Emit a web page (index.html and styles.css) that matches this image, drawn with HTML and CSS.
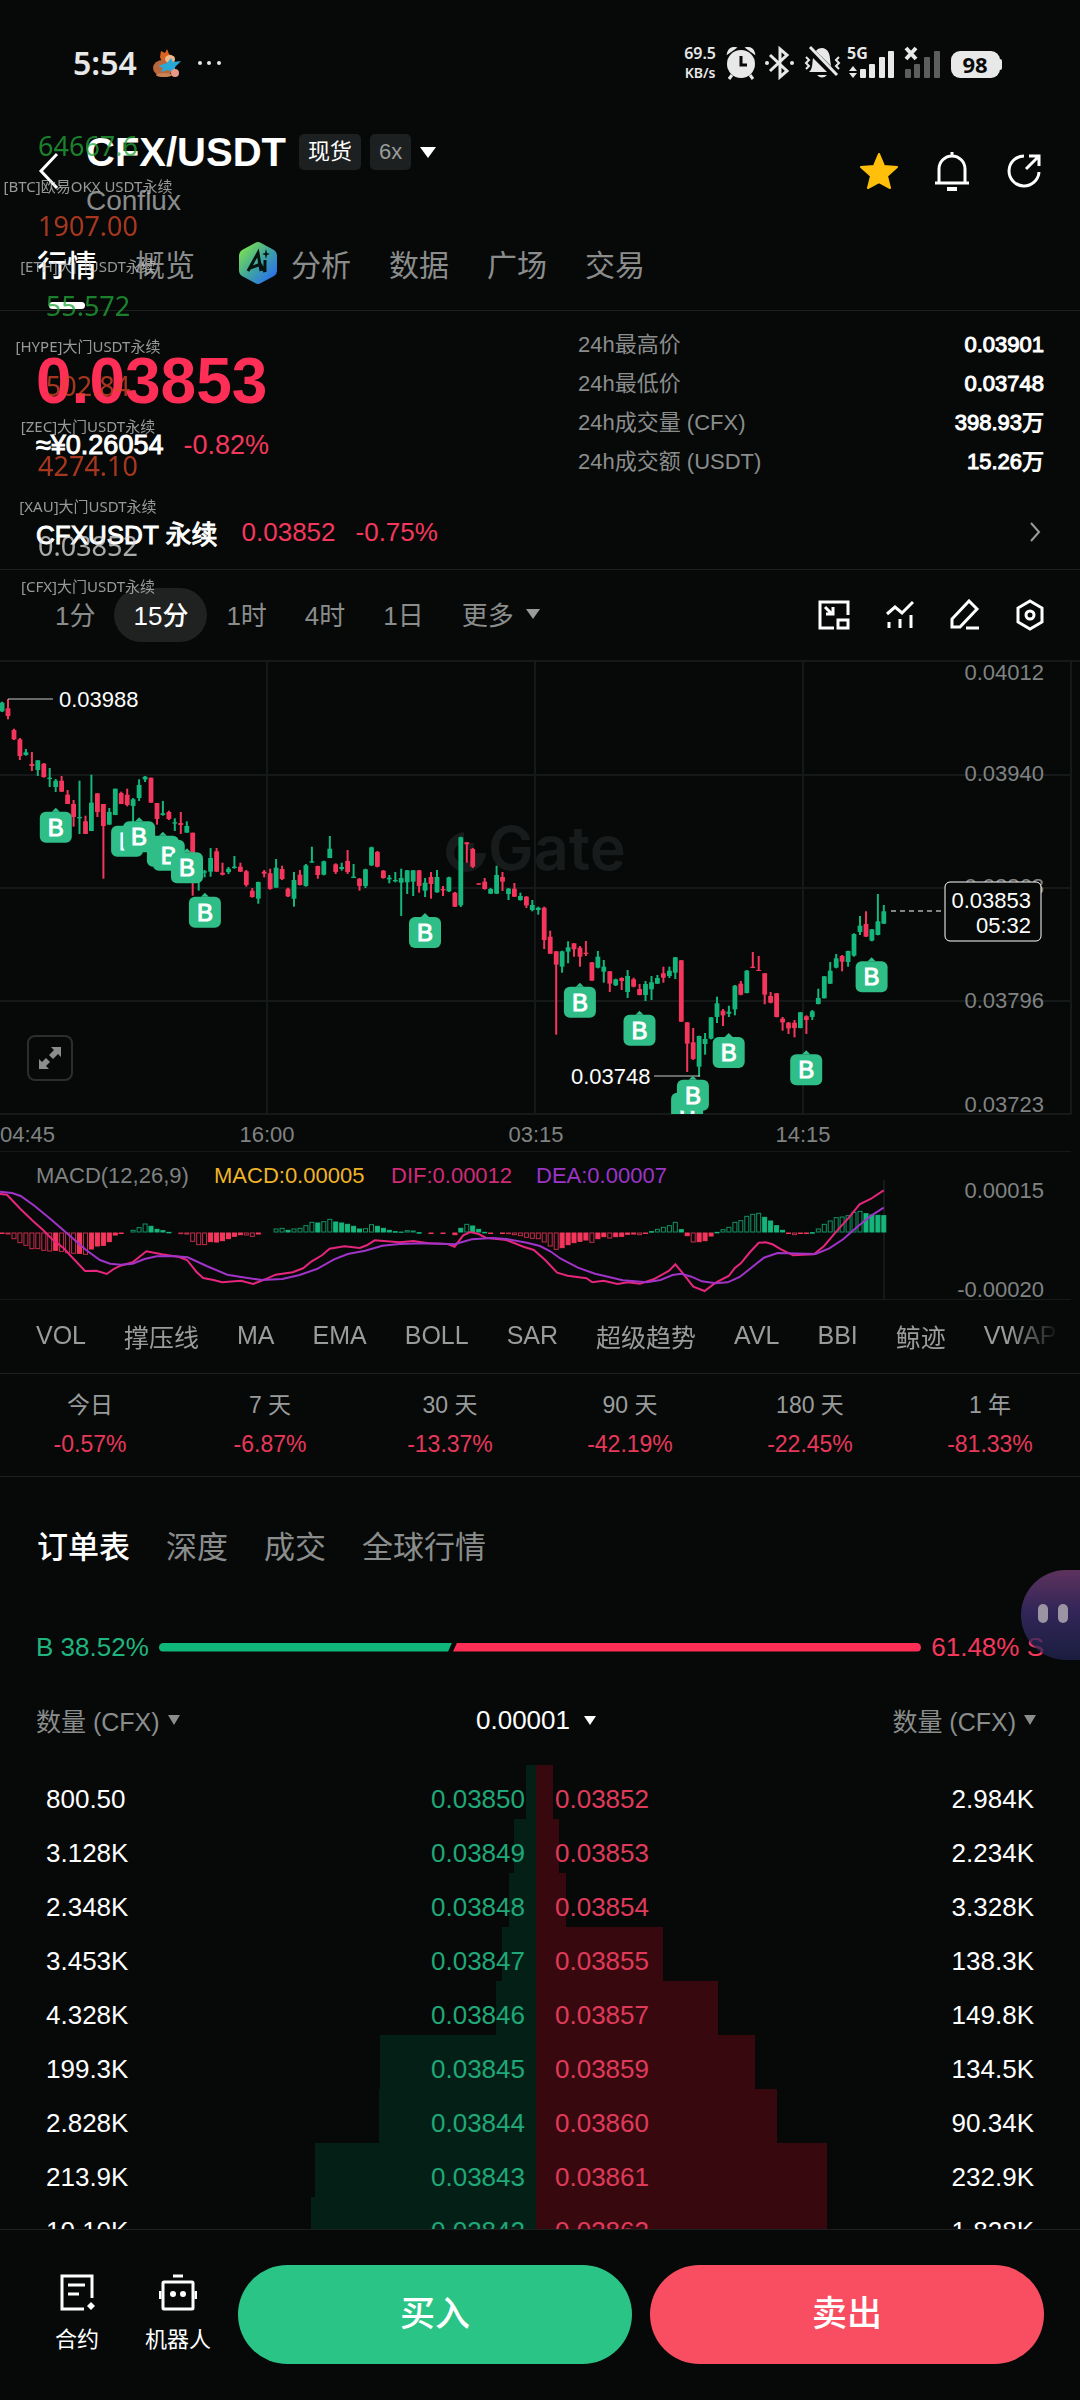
FILE: index.html
```html
<!DOCTYPE html>
<html lang="zh-CN">
<head>
    <meta charset="UTF-8">
    <meta name="viewport" content="width=device-width, initial-scale=1.0">
    <title>CFX/USDT</title>
    <link rel="stylesheet" href="styles.css">
</head>
<body>
<div class="app">

    <div class="status-bar">
        <div class="status-left">
            <span class="clock">5:54</span>
            <svg class="status-pet" viewBox="0 0 28 28" width="28" height="28">
                <path d="M7 8 L8 2 L12 4 L14 0 L16 5 L21 8 L22 14 L10 16Z" fill="#d9641f"/>
                <ellipse cx="10" cy="19" rx="10" ry="8" fill="#b9663c"/>
                <ellipse cx="17" cy="10" rx="5" ry="4" fill="#f0b98a"/>
                <path d="M5 17 L14 14 L18 9 L20 13 L28 12 L22 18 L22 24 L15 21 L8 23 L10 19Z" fill="#28a9d8"/>
                <circle cx="22" cy="24" r="4" fill="#e89a86"/>
                <ellipse cx="11" cy="26" rx="8" ry="2" fill="#c98353"/>
            </svg>
            <svg viewBox="0 0 26 6" width="26" height="6" fill="#e8e8e8"><circle cx="3" cy="3" r="2"/><circle cx="12" cy="3" r="2"/><circle cx="22" cy="3" r="2"/></svg>
        </div>
        <div class="status-right">
            <div class="net-speed"><span>69.5</span><small>KB/s</small></div>
            <svg viewBox="0 0 276 36" width="276" height="36" fill="#e8e8e8">
                <!-- alarm -->
                <g>
                    <circle cx="15" cy="19" r="14"/>
                    <path d="M2 8 A6 6 0 0 1 9 3Z M28 8 A6 6 0 0 0 21 3Z" stroke="#e8e8e8" stroke-width="2"/>
                    <path d="M6 30 L3 34 M24 30 L27 34" stroke="#e8e8e8" stroke-width="3"/>
                    <path d="M15 11 V20 H21" stroke="#060908" stroke-width="3" fill="none"/>
                </g>
                <!-- bluetooth -->
                <g>
                    <path d="M44 10 L61 26 L54 32 V4 L61 10 L44 26" fill="none" stroke="#e8e8e8" stroke-width="3"/>
                    <circle cx="41" cy="18" r="2"/><circle cx="66" cy="18" r="2"/>
                </g>
                <!-- silent bell -->
                <g>
                    <path d="M83 27 C87 24 86 18 87 13 C88 6 92 3 96 3 C101 3 104 8 104 14 C105 20 105 24 109 27Z"/>
                    <path d="M91 30 H101 Q96 35 91 30Z"/>
                    <path d="M81 2 L110 31" stroke="#060908" stroke-width="7"/>
                    <path d="M84 2 L111 30" stroke="#e8e8e8" stroke-width="3"/>
                    <path d="M80 12 l3 3 l-3 3 l3 3 l-3 3 M113 12 l-3 3 l3 3 l-3 3 l3 3" fill="none" stroke="#e8e8e8" stroke-width="2"/>
                </g>
                <!-- signal 1 -->
                <text class="sig-label" x="121" y="14">5G</text>
                <path d="M123 26 l4 -5 l4 5Z M123 28 l4 5 l4 -5Z"/>
                <rect x="134" y="24" width="6" height="9" rx="1"/><rect x="143" y="19" width="6" height="14" rx="1"/>
                <rect x="153" y="12" width="6" height="21" rx="1"/><rect x="162" y="6" width="6" height="27" rx="1"/>
                <!-- signal 2 -->
                <path d="M180 3 L190 14 M190 3 L180 14" stroke="#e8e8e8" stroke-width="4"/>
                <g fill="#5c5e5e">
                    <rect x="179" y="24" width="6" height="9" rx="1"/><rect x="188" y="19" width="6" height="14" rx="1"/>
                    <rect x="198" y="12" width="6" height="21" rx="1"/><rect x="208" y="6" width="6" height="27" rx="1"/>
                </g>
                <!-- battery -->
                <rect x="225" y="6" width="49" height="27" rx="9"/>
                <rect x="272" y="14" width="4" height="11" rx="2"/>
                <text class="battery-label" x="249" y="28">98</text>
            </svg>
        </div>
    </div>

    <header class="pair-header">
        <button class="icon-btn back" aria-label="返回">
            <svg viewBox="0 0 22 38" width="22" height="38" fill="none" stroke="#fff" stroke-width="3"><path d="M19 2 L3 19 L19 36"/></svg>
        </button>
        <div class="pair">
            <div class="pair-line">
                <h1>CFX/USDT</h1>
                <span class="tag tag-light">现货</span>
                <span class="tag">6x</span>
                <svg viewBox="0 0 16 11" width="16" height="11" fill="#fff"><path d="M0 0 H16 L8 11Z"/></svg>
            </div>
            <div class="pair-name">Conflux</div>
        </div>
        <div class="header-actions">
            <button class="icon-btn" aria-label="收藏">
                <svg viewBox="0 0 38 38" width="38" height="38"><path d="M19 2 L24 14 L37 15 L27 24 L30 36 L19 30 L8 36 L11 24 L1 15 L14 14Z" fill="#ffbf0a" stroke="#ffbf0a" stroke-width="2" stroke-linejoin="round"/></svg>
            </button>
            <button class="icon-btn" aria-label="提醒">
                <svg viewBox="0 0 36 40" width="36" height="40" fill="none" stroke="#fff" stroke-width="3"><path d="M18 1 V5 M5 31 V18 A13 13 0 0 1 31 18 V31 M1 32 H35"/><path d="M13 38 H23" stroke-width="4"/></svg>
            </button>
            <button class="icon-btn" aria-label="分享">
                <svg viewBox="0 0 36 36" width="36" height="36" fill="none" stroke="#fff" stroke-width="3"><path d="M18 3 A15 15 0 1 0 33 19 M20 16 L33 3 M23 3 H33 V13"/></svg>
            </button>
        </div>
    </header>

    <nav class="main-tabs">
        <a href="#" class="active">行情</a>
        <a href="#">概览</a>
        <a href="#" class="with-icon">
            <svg viewBox="0 0 38 42" width="38" height="42">
                <defs><linearGradient id="aiFill" x1="0" y1="0" x2="1" y2="1"><stop offset="0.1" stop-color="#7be04f"/><stop offset="0.5" stop-color="#3fa5a0"/><stop offset="0.9" stop-color="#2a6ff0"/></linearGradient></defs>
                <path d="M16 1 Q19 -1 22 1 L35 8 Q38 10 38 13 V29 Q38 32 35 34 L22 41 Q19 43 16 41 L3 34 Q0 32 0 29 V13 Q0 10 3 8Z" fill="url(#aiFill)"/>
                <path d="M9 29 L19 11 L22 29 M11 26 L22 22 M26 18 V30 M20 20 L26 30" fill="none" stroke="#07140f" stroke-width="3"/>
                <path d="M27 7 L28 11 L31 12 L28 13 L27 17 L26 13 L23 12 L26 11Z" fill="#07140f"/>
            </svg>
            分析
        </a>
        <a href="#">数据</a>
        <a href="#">广场</a>
        <a href="#">交易</a>
    </nav>

    <main>
        <section class="summary">
            <div class="quote">
                <div class="last-price">0.03853</div>
                <div class="sub-price"><span>≈¥0.26054</span><span class="down">-0.82%</span></div>
            </div>
            <dl class="stats">
                <div><dt>24h最高价</dt><dd>0.03901</dd></div>
                <div><dt>24h最低价</dt><dd>0.03748</dd></div>
                <div><dt>24h成交量 (CFX)</dt><dd>398.93万</dd></div>
                <div><dt>24h成交额 (USDT)</dt><dd>15.26万</dd></div>
            </dl>
        </section>

        <a href="#" class="perp">
            <span class="perp-name">CFXUSDT 永续</span>
            <span class="down">0.03852</span>
            <span class="down">-0.75%</span>
            <svg viewBox="0 0 14 20" width="14" height="20" fill="none" stroke="#9a9c9c" stroke-width="2"><path d="M1 1 L9 10 L1 19"/></svg>
        </a>

        <div class="toolbar">
            <div class="intervals">
                <button>1分</button>
                <button class="active">15分</button>
                <button>1时</button>
                <button>4时</button>
                <button>1日</button>
                <button class="more">更多 <svg viewBox="0 0 14 10" width="14" height="10" fill="#9a9c9c"><path d="M0 0 H14 L7 10Z"/></svg></button>
            </div>
            <div class="tools">
                <button class="icon-btn" aria-label="小窗">
                    <svg viewBox="0 0 32 32" width="32" height="32" fill="none" stroke="#fff" stroke-width="3"><path d="M16 29 H2 V3 H30 V16 M7 8 L14 15 M15 8 V15 H8"/><rect x="20" y="21" width="10" height="8"/></svg>
                </button>
                <button class="icon-btn" aria-label="指标">
                    <svg viewBox="0 0 28 32" width="28" height="32" fill="none" stroke="#fff" stroke-width="3"><path d="M1 15 L9 8 L16 14 L27 3 M3 29 V23 M14 29 V20 M25 29 V16"/></svg>
                </button>
                <button class="icon-btn" aria-label="画图">
                    <svg viewBox="0 0 30 32" width="30" height="32" fill="none" stroke="#fff" stroke-width="3"><path d="M2 28 V20 L19 2 L27 10 L10 28Z M16 29 H29"/></svg>
                </button>
                <button class="icon-btn" aria-label="设置">
                    <svg viewBox="0 0 28 32" width="28" height="32" fill="none" stroke="#fff" stroke-width="3"><path d="M14 2 L26 9 V23 L14 30 L2 23 V9Z"/><circle cx="14" cy="16" r="4"/></svg>
                </button>
            </div>
        </div>

        <section class="charts">
            <svg class="chart" viewBox="0 0 1080 492">
                <g class="grid">
                    <path d="M0 1 H1080 M0 115 H1071 M0 228 H1071 M0 341 H1071 M0 454 H1071 M0 492 H1071"/>
                    <path d="M267 1 V454 M535 1 V454 M803 1 V454 M1071 1 V454"/>
                </g>
                <g class="watermark">
                    <path d="M464 172 A20 20 0 1 0 486 193 H474 A10 10 0 1 1 464 183Z M466 183 H474 V190 H466Z"/>
                    <text x="488" y="210">Gate</text>
                </g>
                <g id="candles"></g>
                <path d="M8 39 H53" class="pointer"/>
                <text x="59" y="47" class="bright">0.03988</text>
                <path d="M654 416 H700" class="pointer"/>
                <text x="571" y="424" class="bright">0.03748</text>
                <g id="orders"></g>
                <g class="axis end">
                    <text x="1044" y="20">0.04012</text>
                    <text x="1044" y="121">0.03940</text>
                    <text x="1044" y="234">0.03868</text>
                    <text x="1044" y="348">0.03796</text>
                    <text x="1044" y="452">0.03723</text>
                </g>
                <path d="M891 251 H944" class="last-line"/>
                <rect x="945" y="222" width="96" height="59" rx="5" class="last-box"/>
                <g class="bright end">
                    <text x="1031" y="248">0.03853</text>
                    <text x="1031" y="273">05:32</text>
                </g>
                <g class="axis">
                    <text x="0" y="482">04:45</text>
                    <text x="267" y="482" class="middle">16:00</text>
                    <text x="536" y="482" class="middle">03:15</text>
                    <text x="803" y="482" class="middle">14:15</text>
                </g>
            </svg>
            <button class="expand" aria-label="全屏">
                <svg viewBox="0 0 24 24" width="24" height="24" fill="#8b8d8d"><path d="M13 1 H23 V11 L20 8 L15 13 L11 9 L16 4Z M1 23 V13 L4 16 L8 12 L12 16 L8 20 L11 23Z"/></svg>
            </button>
            <svg class="chart" viewBox="0 0 1080 148">
                <path d="M884 28 V148 M0 148 H1071" class="grid"/>
                <text x="36" y="31" class="axis">MACD(12,26,9)</text>
                <text x="214" y="31" class="c-macd">MACD:0.00005</text>
                <text x="391" y="31" class="c-dif">DIF:0.00012</text>
                <text x="536" y="31" class="c-dea">DEA:0.00007</text>
                <g id="macd"></g>
                <g class="axis end">
                    <text x="1044" y="46">0.00015</text>
                    <text x="1044" y="145">-0.00020</text>
                </g>
            </svg>
        </section>

        <div class="indicators">
            <button>VOL</button><button>撑压线</button><button>MA</button><button>EMA</button><button>BOLL</button><button>SAR</button><button>超级趋势</button><button>AVL</button><button>BBI</button><button>鲸迹</button><button>VWAP</button>
        </div>

        <dl class="performance">
            <div><dt>今日</dt><dd>-0.57%</dd></div>
            <div><dt>7 天</dt><dd>-6.87%</dd></div>
            <div><dt>30 天</dt><dd>-13.37%</dd></div>
            <div><dt>90 天</dt><dd>-42.19%</dd></div>
            <div><dt>180 天</dt><dd>-22.45%</dd></div>
            <div><dt>1 年</dt><dd>-81.33%</dd></div>
        </dl>

        <section class="book">
            <nav class="book-tabs">
                <a href="#" class="active">订单表</a>
                <a href="#">深度</a>
                <a href="#">成交</a>
                <a href="#">全球行情</a>
            </nav>

            <div class="ratio">
                <span class="up">B 38.52%</span>
                <div class="ratio-bar">
                    <div class="ratio-buy" style="flex-grow: 38.52"></div>
                    <div class="ratio-sell" style="flex-grow: 61.48"></div>
                </div>
                <span class="down">61.48% S</span>
                <button class="assistant" aria-label="助手"><i></i><i></i></button>
            </div>

            <table>
                <thead>
                    <tr>
                        <th><button>数量 (CFX)<svg viewBox="0 0 12 10" width="12" height="10" fill="#8b8d8d"><path d="M0 0 H12 L6 10Z"/></svg></button></th>
                        <th colspan="2">
                            <label class="precision">
                                <select aria-label="价格精度"><option>0.00001</option></select>
                                <svg viewBox="0 0 12 9" width="12" height="9" fill="#fff"><path d="M0 0 H12 L6 9Z"/></svg>
                            </label>
                        </th>
                        <th><button>数量 (CFX)<svg viewBox="0 0 12 10" width="12" height="10" fill="#8b8d8d"><path d="M0 0 H12 L6 10Z"/></svg></button></th>
                    </tr>
                </thead>
                <tbody>
                    <tr style="--bid: 0.9%; --ask: 1.6%"><td>800.50</td><td>0.03850</td><td>0.03852</td><td>2.984K</td></tr>
                    <tr style="--bid: 2.0%; --ask: 2.2%"><td>3.128K</td><td>0.03849</td><td>0.03853</td><td>2.234K</td></tr>
                    <tr style="--bid: 2.5%; --ask: 2.8%"><td>2.348K</td><td>0.03848</td><td>0.03854</td><td>3.328K</td></tr>
                    <tr style="--bid: 3.1%; --ask: 11.8%"><td>3.453K</td><td>0.03847</td><td>0.03855</td><td>138.3K</td></tr>
                    <tr style="--bid: 3.7%; --ask: 16.9%"><td>4.328K</td><td>0.03846</td><td>0.03857</td><td>149.8K</td></tr>
                    <tr style="--bid: 14.4%; --ask: 20.3%"><td>199.3K</td><td>0.03845</td><td>0.03859</td><td>134.5K</td></tr>
                    <tr style="--bid: 14.5%; --ask: 22.3%"><td>2.828K</td><td>0.03844</td><td>0.03860</td><td>90.34K</td></tr>
                    <tr style="--bid: 20.4%; --ask: 27.0%"><td>213.9K</td><td>0.03843</td><td>0.03861</td><td>232.9K</td></tr>
                    <tr style="--bid: 20.8%; --ask: 27.0%"><td>10.10K</td><td>0.03842</td><td>0.03862</td><td>1.828K</td></tr>
                </tbody>
            </table>
        </section>
    </main>

    <footer class="trade-bar">
        <a href="#" class="shortcut">
            <svg viewBox="0 0 38 40" width="38" height="40" fill="none" stroke="#fff" stroke-width="3"><path d="M26 36 H4 V3 H34 V25 M10 12 H27 M10 21 H21"/><path d="M33 29 L37 33 L33 37 L29 33Z" fill="#fff" stroke="none"/></svg>
            合约
        </a>
        <a href="#" class="shortcut">
            <svg viewBox="0 0 38 40" width="38" height="40" fill="none" stroke="#fff" stroke-width="3"><rect x="4" y="9" width="30" height="27" rx="1"/><path d="M14 3 H24 M1 18 V26 M37 18 V26"/><circle cx="14" cy="21" r="3" fill="#fff" stroke="none"/><circle cx="24" cy="21" r="3" fill="#fff" stroke="none"/></svg>
            机器人
        </a>
        <button class="trade buy">买入</button>
        <button class="trade sell">卖出</button>
    </footer>

    <!-- floating price ticker -->
    <aside class="ticker">
        <div class="t-up">64667.6<small>[BTC]欧易OKX USDT永续</small></div>
        <div class="t-down">1907.00<small>[ETH]大门USDT永续</small></div>
        <div class="t-up">55.572<small>[HYPE]大门USDT永续</small></div>
        <div class="t-down">502.84<small>[ZEC]大门USDT永续</small></div>
        <div class="t-down">4274.10<small>[XAU]大门USDT永续</small></div>
        <div>0.03852<small>[CFX]大门USDT永续</small></div>
    </aside>
</div>
<script src="chart.js"></script>
</body>
</html>
```
FILE: styles.css
```css
* {
    box-sizing: border-box;
}

body {
    margin: 0;
    background: #060908;
    color: #fff;
    font-family: "Liberation Sans", "Noto Sans CJK SC", sans-serif;
    font-size: 26px;
}

a {
    color: inherit;
    text-decoration: none;
}

button, select {
    font: inherit;
    color: inherit;
    background: none;
    border: none;
    padding: 0;
    cursor: pointer;
}

svg {
    display: block;
    flex-shrink: 0;
}

dl, dd {
    margin: 0;
}

.icon-btn {
    display: flex;
}

.up {
    color: #1fb57e;
}

.down {
    color: #f5375c;
}

.app {
    position: relative;
    display: flex;
    flex-direction: column;
    height: 100vh;
    overflow: hidden;
}

/* status bar */
.status-bar {
    display: flex;
    justify-content: space-between;
    align-items: center;
    height: 125px;
    padding: 0 78px 0 73px;
    color: #e8e8e8;
    font-family: "Noto Sans", sans-serif;
}

.status-left, .status-right {
    display: flex;
    align-items: center;
}

.status-left {
    gap: 16px;
}

.status-right {
    gap: 10px;
}

.clock {
    font-size: 32px;
    font-weight: 600;
}

.net-speed {
    display: flex;
    flex-direction: column;
    align-items: center;
    font-size: 16px;
    font-weight: 600;
    line-height: 20px;
}

.net-speed small {
    font-size: 14px;
}

.sig-label {
    font-size: 16px;
    font-weight: 700;
}

.battery-label {
    font-size: 22px;
    font-weight: 700;
    fill: #060908;
    text-anchor: middle;
}

/* header */
.pair-header {
    display: flex;
    align-items: center;
    height: 92px;
    padding: 0 38px;
}

.pair {
    flex: 1;
    padding: 10px 0 0 26px;
}

.pair-line {
    display: flex;
    align-items: center;
    gap: 9px;
}

.pair h1 {
    margin: 0 4px 0 0;
    font-size: 40px;
    line-height: 50px;
}

.tag {
    padding: 0 9px;
    border-radius: 5px;
    background: #1d2020;
    color: #9a9c9c;
    font-size: 22px;
    line-height: 36px;
}

.tag-light {
    color: #fff;
}

.pair-name {
    color: #8b8d8d;
    font-size: 28px;
    line-height: 48px;
}

.header-actions {
    display: flex;
    align-items: center;
    gap: 36px;
}

.main-tabs {
    display: flex;
    align-items: center;
    gap: 38px;
    height: 94px;
    padding: 0 37px 2px;
    border-bottom: 1px solid #1d2020;
    color: #8b8d8d;
    font-size: 30px;
}

.main-tabs a {
    position: relative;
}

.main-tabs .active {
    color: #fff;
    font-weight: 500;
}

.main-tabs .active::after {
    content: "";
    position: absolute;
    left: 12px;
    right: 12px;
    bottom: -24px;
    height: 7px;
    border-radius: 4px;
    background: #fff;
}

.main-tabs .with-icon {
    display: flex;
    align-items: center;
    gap: 14px;
    padding-left: 6px;
}

main {
    flex: 1;
    min-height: 0;
    overflow: hidden;
}

/* summary */
.summary {
    display: grid;
    grid-template-columns: 1fr 466px;
    padding: 14px 36px 14px;
}

.quote {
    padding-top: 24px;
}

.last-price {
    color: #ff2e57;
    font-size: 64px;
    font-weight: 700;
    line-height: 64px;
}

.sub-price {
    display: flex;
    gap: 20px;
    margin-top: 16px;
    font-size: 27px;
    line-height: 32px;
}

.stats div {
    display: flex;
    justify-content: space-between;
    font-size: 22px;
    line-height: 39px;
}

.stats dt {
    color: #8b8d8d;
}

.stats dd, .perp-name, .sub-price span:first-child {
    -webkit-text-stroke: 1px #fff;
}

.perp {
    display: flex;
    align-items: center;
    gap: 20px;
    height: 75px;
    padding: 0 36px;
    border-bottom: 1px solid #1d2020;
}

.perp-name {
    margin-right: 4px;
}

.perp svg {
    margin-left: auto;
}

/* interval toolbar */
.toolbar {
    display: flex;
    justify-content: space-between;
    align-items: center;
    height: 90px;
    padding: 0 36px;
}

.intervals, .tools {
    display: flex;
    align-items: center;
}

.tools {
    gap: 36px;
}

.intervals button {
    height: 54px;
    padding: 0 19px 3px;
    border-radius: 27px;
    color: #8b8d8d;
}

.intervals .active {
    background: #1f2221;
    color: #fff;
    font-weight: 500;
}

.intervals .more {
    display: flex;
    align-items: center;
    gap: 12px;
}

/* charts */
.charts {
    position: relative;
}

.chart {
    width: 100%;
    height: auto;
    font-size: 22px;
}

.grid {
    fill: none;
    stroke: #161919;
    stroke-width: 2;
}

.watermark {
    fill: #181b1b;
}

.watermark text {
    font-family: Inter, sans-serif;
    font-size: 61px;
    font-weight: 600;
}

.axis {
    fill: #808282;
}

.bright {
    fill: #fff;
}

.end {
    text-anchor: end;
}

.middle {
    text-anchor: middle;
}

.pointer {
    stroke: #c8caca;
    stroke-width: 1;
}

.last-line {
    stroke: #fff;
    stroke-dasharray: 5 4;
}

.last-box {
    fill: #060908;
    stroke: #fff;
}

.candle-up {
    fill: #15b67c;
}

.candle-down {
    fill: #f5365c;
}

.order {
    fill: #2fbe87;
}

.order-label {
    fill: #fff;
    stroke: #fff;
    stroke-width: 1px;
    font-size: 24px;
    text-anchor: middle;
}

.bar-up {
    fill: #15b67c;
    stroke: #15b67c;
}

.bar-down {
    fill: #f5365c;
    stroke: #f5365c;
}

.hollow {
    fill: #060908;
    stroke-opacity: 0.8;
}

.dif, .dea {
    fill: none;
    stroke-width: 2;
}

.dif {
    stroke: #e6267c;
}

.dea {
    stroke: #a033c8;
}

.c-macd {
    fill: #f0b428;
}

.c-dif {
    fill: #d02a78;
}

.c-dea {
    fill: #9c34c8;
}

.expand {
    position: absolute;
    left: 27px;
    top: 375px;
    display: flex;
    align-items: center;
    justify-content: center;
    width: 46px;
    height: 46px;
    border: 2px solid #2b2e2e;
    border-radius: 8px;
}

/* indicators */
.indicators {
    display: flex;
    gap: 38px;
    height: 73px;
    margin-right: 20px;
    padding-left: 36px;
    overflow: hidden;
    color: #9a9c9c;
    font-size: 25px;
    -webkit-mask-image: linear-gradient(to left, transparent, #000 50px);
    mask-image: linear-gradient(to left, transparent, #000 50px);
}

.indicators button {
    flex-shrink: 0;
    padding-bottom: 2px;
}

.performance {
    display: grid;
    grid-template-columns: repeat(6, 1fr);
    padding: 12px 0;
    border: solid #1d2020;
    border-width: 1px 0;
    font-size: 23px;
    line-height: 39px;
    text-align: center;
}

.performance dt {
    color: #9a9c9c;
}

.performance dd {
    color: #e8385a;
}

/* order book */
.book-tabs {
    display: flex;
    gap: 36px;
    padding: 0 37px;
    margin-top: 41px;
    color: #8b8d8d;
    font-size: 31px;
    line-height: 60px;
}

.book-tabs .active {
    color: #fff;
    font-weight: 500;
}

.ratio {
    position: relative;
    display: flex;
    align-items: center;
    gap: 10px;
    margin-top: 39px;
    padding: 0 36px;
    line-height: 60px;
}

.ratio-bar {
    flex: 1;
    display: flex;
    gap: 1px;
    height: 9px;
    border-radius: 5px;
    overflow: hidden;
}

.ratio-buy {
    background: #0fb87a;
    clip-path: polygon(0 0, 100% 0, calc(100% - 4px) 100%, 0 100%);
}

.ratio-sell {
    background: #ff2e57;
    clip-path: polygon(4px 0, 100% 0, 100% 100%, 0 100%);
}

.assistant {
    position: absolute;
    right: 0;
    bottom: 17px;
    display: flex;
    gap: 10px;
    width: 59px;
    height: 90px;
    padding: 34px 0 0 17px;
    border-radius: 45px 0 0 45px;
    background: linear-gradient(#6d3a6cd9, #3a2b66d9 45%, #232657b3);
}

.assistant i {
    width: 10px;
    height: 19px;
    border-radius: 5px;
    background: #9a94a3;
}

table {
    width: 100%;
    border-collapse: collapse;
    table-layout: fixed;
}

th {
    height: 88px;
    padding: 0 36px;
    color: #8b8d8d;
    font-size: 25px;
    font-weight: 400;
    text-align: left;
}

th:last-child {
    padding-right: 44px;
}

th:last-child button {
    margin-left: auto;
}

th button, .precision {
    display: flex;
    align-items: center;
    gap: 8px;
    padding-bottom: 2px;
    white-space: nowrap;
}

.precision {
    justify-content: center;
    gap: 14px;
    padding-right: 8px;
    color: #fff;
    font-size: 26px;
}

.precision select {
    appearance: none;
}

tbody tr {
    background: linear-gradient(90deg,
        transparent calc(49.6% - var(--bid)),
        #042016 0 49.6%,
        #37090f 0 calc(49.6% + var(--ask)),
        transparent 0);
}

td {
    height: 54px;
    padding: 14px 0 0;
    line-height: 40px;
}

td:nth-child(1) {
    padding-left: 46px;
}

td:nth-child(2) {
    padding-right: 15px;
    color: #1fa878;
    text-align: right;
}

td:nth-child(3) {
    padding-left: 15px;
    color: #e03a5a;
}

td:nth-child(4) {
    padding-right: 46px;
    text-align: right;
}

/* bottom bar */
.trade-bar {
    display: flex;
    align-items: flex-start;
    height: 171px;
    padding: 35px 36px 0 55px;
    border-top: 1px solid #1d2020;
}

.shortcut {
    display: flex;
    flex-direction: column;
    align-items: center;
    gap: 9px;
    margin-right: 46px;
    padding-top: 8px;
    font-size: 22px;
    line-height: 36px;
}

.shortcut + .shortcut {
    margin-right: 27px;
}

.trade {
    flex: 1;
    height: 99px;
    padding-bottom: 8px;
    border-radius: 50px;
    font-size: 35px;
    font-weight: 500;
}

.buy {
    margin-right: 18px;
    background: #2ac487;
}

.sell {
    background: #f94e61;
}

/* ticker lies over the page */
.ticker {
    position: absolute;
    left: 0;
    top: 130px;
    width: 176px;
    color: #e0e0e0;
    font-family: "Noto Sans", "Noto Sans CJK SC", sans-serif;
    font-size: 27px;
    line-height: 32px;
    text-align: center;
    opacity: 0.75;
    pointer-events: none;
}

.ticker div {
    height: 80px;
}

.ticker small {
    display: block;
    margin-top: 12px;
    color: #c8c8c8;
    font-size: 15px;
    line-height: 24px;
    white-space: nowrap;
}

.ticker .t-up {
    color: #22a838;
}

.ticker .t-down {
    color: #dd4626;
}
```
FILE: chart.js
```js
// Plot data is kept on a fine grid: 3136 units across the 1080 wide view, 3 units per px down
const SX = 1080 / 3136;
const STEP = 17.3;
const TOP = 30;

const px = v => Math.round(v * SX * 10) / 10;
const py = v => Math.round((v - TOP) / 3 * 10) / 10;

// direction, high, body top, body bottom, low
const candles = `G155,158,184,186 R147,175,198,208 R236,240,268,270 R264,268,318,330 G297,307,315,317 R306,342,348,363
G331,331,360,378 R339,341,381,383 G354,383,387,411 G387,392,411,426 R378,392,425,426 R420,434,462,462
R450,462,501,530 G392,501,505,552 R497,514,552,552 G374,458,543,543 R430,430,486,501 R462,462,528,686
G474,486,524,524 G416,416,495,495 R425,429,462,462 R416,434,465,469 G444,448,468,530 G388,405,444,453
G378,380,388,396 R383,383,458,458 R459,459,507,524 G453,490,495,497 R482,486,507,510 G505,517,521,543
R486,519,525,552 G514,528,548,548 R548,548,650,737 G640,660,680,722 G660,664,668,682 G594,624,665,680
R594,604,665,666 R638,668,674,676 G651,656,666,672 G618,650,654,656 R638,650,665,666 R660,664,705,710
R714,722,741,743 G695,696,746,761 R660,665,671,682 R656,670,717,719 G627,653,713,713 R647,657,687,690
R713,716,739,741 G666,690,746,770 R660,674,705,706 G642,646,708,710 G590,634,638,638 R647,648,675,686
G632,634,674,676 G558,596,624,624 R640,643,666,672 G638,651,657,662 R600,633,666,672 G642,680,684,684
R684,686,708,722 G656,658,708,714 G590,592,646,648 R603,606,650,652 R660,662,684,686 G675,683,688,700
G666,690,694,697 G656,684,698,798 G660,661,697,732 G660,661,695,738 R660,661,708,728 G684,698,722,741
R666,681,702,746 G660,681,727,728 R708,717,721,738 G680,682,724,726 R726,728,770,771 G560,562,766,771
R576,577,583,638 R594,597,650,654 R700,700,704,704 R684,695,717,719 G714,717,731,732 G647,675,731,732
R666,681,695,723 G714,716,732,750 R699,716,740,741 G728,738,750,752 R738,740,766,774 G750,765,780,784
G770,773,780,794 R770,773,870,897 R842,860,911,912 R903,904,944,1154 G902,904,950,968 G874,892,905,940
R879,880,898,920 R888,893,920,950 R873,908,912,918 R936,937,992,993 G903,920,953,955 G930,950,965,998
R963,964,1001,1026 G986,988,1006,1008 R982,984,993,1020 G960,978,1026,1044 R983,988,1010,1012 R1002,1017,1035,1036
G993,1002,1035,1053 G978,997,1018,1050 G975,984,1001,1002 R950,970,983,998 G950,962,978,984 G921,922,968,987
R930,931,1115,1116 R1116,1117,1181,1266 R1134,1177,1227,1230 G1157,1158,1250,1280 G1149,1167,1182,1214 G1101,1102,1166,1168
G1040,1060,1101,1119 R1077,1082,1096,1128 G1067,1085,1091,1101 G1005,1007,1078,1096 R993,1001,1034,1036 G960,962,1029,1030
R906,950,954,954 R918,960,963,963 R969,970,1034,1063 R1026,1038,1058,1060 R1029,1030,1101,1102 R1101,1106,1117,1142
R1116,1118,1135,1152 R1110,1118,1134,1162 G1086,1087,1134,1135 R1096,1099,1110,1152 G1080,1084,1101,1110 G1016,1044,1062,1063
G978,979,1045,1045 G936,962,1001,1002 G912,925,953,955 R915,918,935,964 G902,903,936,950 G850,852,917,920
G798,827,846,855 R784,822,860,861 G837,838,872,874 G732,814,855,856 G765,784,821,822`.split(/\s+/);

// order marks: centre x, top y
const orders = [[162, 485], [369, 527], [404, 514], [473, 557], [490, 569], [543, 607], [595, 740], [1234, 801],
    [1684, 1010], [1857, 1094], [1995, 1328], [2012, 1289], [2116, 1161], [2341, 1213], [2531, 934]];

// histogram heights, h = hollow bar
const bars = `-3 -6h -20h -32h -40h -50h -50h -55h -57h -55 -58h -62h -64h -64 -67h -51 -42 -40 -29 -9 -4 0 8h 16h 27h 20 11 7 2 0
-5h -6h -28h -38h -38h -29 -30 -26 -20 -13 -8 -9h -13h -6 0 0 12h 14h 8 12h 14h 22h 32h 30 34h 41h 33 30 26 20
12 13h 25h 20 14 8 4 3h 7h 6h 1 0 -3 0 -2 0 -8 14 26h 21 11 2 -2 0 -2 -5h -8h -11h -16h -19h
-20h -30h -42h -52h -47 -38 -32 -28 -24 -31h -20 -14 -18h -14 -13 -7 -6 -8h -1 4 11h 17h 22h 32h 10 -11 -30h -29 -26 -12
2 10h 17h 32h 37h 50h 56h 59h 47 36 22 8 -1 -8h -2 -2 1 12h 26h 36h 46h 48h 52h 62h 65h 58 54 53 52`.split(/\s+/);

const dif = `0,222 20,224 60,268 95,302 125,330 150,356 185,385 212,415 247,453 280,452 310,462 330,447 350,437 385,427 425,394
470,403 520,411 543,420 570,455 590,474 620,480 645,487 700,482 735,492 770,478 800,464 850,457 880,445 905,424 935,406
957,386 1000,379 1045,384 1065,376 1088,361 1160,367 1200,363 1245,370 1300,372 1320,380 1345,346 1365,336 1390,342 1410,353
1470,360 1520,380 1550,390 1583,420 1618,458 1648,467 1703,475 1720,487 1753,482 1793,492 1823,487 1858,491 1898,478
1943,452 1961,433 1983,460 2013,500 2046,513 2078,488 2116,468 2133,445 2151,430 2178,396 2203,368 2223,367 2243,373
2268,388 2303,406 2363,403 2393,378 2428,335 2463,295 2496,253 2528,237 2566,211`;

const dea = `0,215 35,219 60,228 100,257 150,300 200,345 250,390 290,420 320,431 350,434 385,431 420,417 455,409 500,408 545,412
600,438 660,464 700,471 760,480 820,477 870,465 920,447 970,418 1010,402 1060,392 1110,377 1160,372 1230,370 1320,373
1370,358 1430,354 1470,357 1530,368 1568,378 1598,394 1628,416 1678,443 1728,461 1808,481 1878,487 1918,480 1953,465
1978,461 2008,470 2038,484 2078,490 2113,487 2148,471 2188,438 2218,413 2258,399 2368,402 2408,385 2448,358 2488,322
2528,288 2566,263`;

// candles
let html = '';
candles.forEach((c, i) => {
    const [high, top, bottom, low] = c.slice(1).split(',').map(Number);
    const x = px(6 + i * STEP);
    const cls = c[0] === 'G' ? 'candle-up' : 'candle-down';
    html += `<rect class="${cls}" x="${x - 2.4}" y="${py(top)}" width="4.8" height="${Math.max(1, (bottom - top) / 3)}"/>`;
    html += `<rect class="${cls}" x="${x - 1}" y="${py(high)}" width="2" height="${Math.max(1, (low - high) / 3)}"/>`;
});
document.getElementById('candles').innerHTML = html;

// order marks, cut off at the bottom of the price panel
html = '<clipPath id="pane"><rect width="1080" height="454"/></clipPath><g clip-path="url(#pane)">';
orders.forEach(([ox, oy]) => {
    const x = px(ox), y = py(oy);
    html += `<path class="order" d="M${x - 4} ${y} L${x} ${y - 4} L${x + 4} ${y}Z"/>`;
    html += `<rect class="order" x="${x - 16}" y="${y}" width="32" height="31" rx="6"/>`;
    html += `<text class="order-label" x="${x}" y="${y + 24}">B</text>`;
});
document.getElementById('orders').innerHTML = html + '</g>';

// macd histogram and lines
const line = s => s.split(/\s+/).map(p => {
    const [x, y] = p.split(',').map(Number);
    return px(x) + ',' + Math.round((y - 96) / 3 * 10) / 10;
}).join(' ');
const zero = 81;

html = '';
bars.forEach((b, i) => {
    const v = parseInt(b);
    if (!v) return;
    const h = Math.abs(v) / 3;
    const cls = (v > 0 ? 'bar-up' : 'bar-down') + (b.endsWith('h') ? ' hollow' : '');
    html += `<rect class="${cls}" x="${px(6 + i * STEP) - 2}" y="${v > 0 ? zero - h : zero}" width="4" height="${Math.max(0.5, h - 1)}"/>`;
});
html += `<polyline class="dif" points="${line(dif)}"/><polyline class="dea" points="${line(dea)}"/>`;
document.getElementById('macd').innerHTML = html;
```
